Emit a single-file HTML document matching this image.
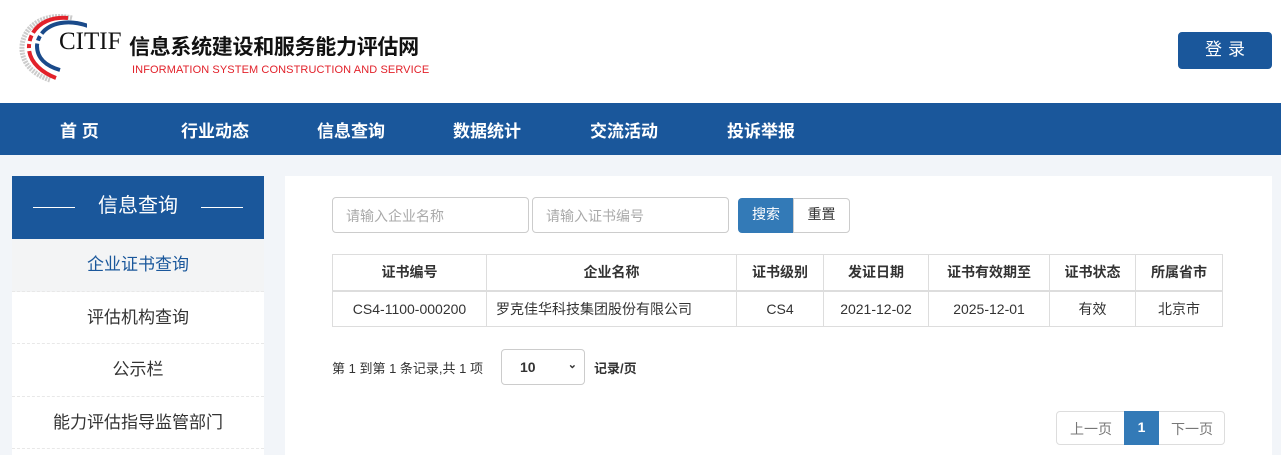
<!DOCTYPE html>
<html><head><meta charset="utf-8"><style>
*{margin:0;padding:0;box-sizing:border-box}
body{width:1281px;height:455px;overflow:hidden;background:#f2f5f9;font-family:"Liberation Sans","Noto Sans CJK SC",sans-serif;position:relative}
.abs{position:absolute}
.hdr{left:0;top:0;width:1281px;height:103px;background:#fff}
.nav{left:0;top:103px;width:1281px;height:52px;background:#1a579b}
.nav span{position:absolute;top:14px;color:#fff;font-size:17px;font-weight:bold;white-space:nowrap}
.side{left:12px;top:176px;width:252px;height:279px;background:#fff}
.sh{height:63px;background:#1a579b;color:#fff;font-size:20px;text-align:center;line-height:60px;position:relative}
.sh i{position:absolute;top:31px;width:42px;height:1px;background:#fff}
.si{height:52.5px;line-height:52px;text-align:center;font-size:17px;color:#333;border-bottom:1px dashed #e8e8e8}
.panel{left:285px;top:176px;width:987px;height:279px;background:#fff}
.inp{position:absolute;top:197px;height:36px;border:1px solid #ccc;border-radius:4px;font-size:14px;color:#aaa;padding:8px 13px}
table{position:absolute;left:332px;top:254px;border-collapse:collapse;font-size:14px;color:#333}
td,th{border:1px solid #ddd;text-align:center;height:36px;padding:0}
th{border-bottom:2px solid #ddd}
</style></head><body>
<div class="abs hdr"></div>
<svg class="abs" style="left:12px;top:12px" width="75" height="75" viewBox="0 0 75 75">
<path d="M60 6 C35 0 12 12 10 34 C9 50 20 62 38 68" fill="none" stroke="#ccc" stroke-width="5" stroke-dasharray="2 1"/>
<path d="M56 6 C34 4 18 16 17 34 C16 48 28 60 44 66" fill="none" stroke="#e2212a" stroke-width="4" stroke-dasharray="40 3 6 3 4 3"/>
<path d="M76 14 C48 4 26 16 25 34 C25 46 34 54 48 58" fill="none" stroke="#1a4a8a" stroke-width="4" stroke-dasharray="50 3 5 3"/>
</svg>
<div class="abs" style="left:59px;top:28px;font-family:'Liberation Serif',serif;font-size:25px;color:#111">CITIF</div>
<div class="abs" style="left:129px;top:31px;font-size:21px;font-weight:bold;color:#111;letter-spacing:-0.3px">信息系统建设和服务能力评估网</div>
<div class="abs" style="left:132px;top:64px;font-size:11px;color:#e2212a;white-space:nowrap;letter-spacing:0.1px">INFORMATION SYSTEM CONSTRUCTION AND SERVICE</div>
<div class="abs" style="left:1178px;top:32px;width:94px;height:37px;background:#1a579b;border-radius:4px;color:#fff;font-size:17px;text-align:center;line-height:36px;letter-spacing:6px;padding-left:6px">登录</div>
<div class="abs nav">
<span style="left:60px">首 页</span><span style="left:181px">行业动态</span><span style="left:317px">信息查询</span><span style="left:453px">数据统计</span><span style="left:590px">交流活动</span><span style="left:727px">投诉举报</span>
</div>
<div class="abs side">
<div class="sh"><i style="left:21px"></i>信息查询<i style="right:21px"></i></div>
<div class="si" style="background:#f3f4f5;color:#1a579b">企业证书查询</div>
<div class="si">评估机构查询</div>
<div class="si">公示栏</div>
<div class="si">能力评估指导监管部门</div>
</div>
<div class="abs panel"></div>
<div class="inp" style="left:332px;width:197px">请输入企业名称</div>
<div class="inp" style="left:532px;width:197px">请输入证书编号</div>
<div class="abs" style="left:738px;top:198px;width:56px;height:35px;background:#337ab7;border-radius:4px 0 0 4px;color:#fff;font-size:14px;text-align:center;line-height:33px">搜索</div>
<div class="abs" style="left:793px;top:198px;width:57px;height:35px;border:1px solid #ccc;border-radius:0 4px 4px 0;color:#333;font-size:14px;text-align:center;line-height:31px">重置</div>
<table>
<tr><th style="width:154px">证书编号</th><th style="width:250px">企业名称</th><th style="width:87px">证书级别</th><th style="width:105px">发证日期</th><th style="width:121px">证书有效期至</th><th style="width:86px">证书状态</th><th style="width:87px">所属省市</th></tr>
<tr><td>CS4-1100-000200</td><td style="text-align:left;padding-left:9px">罗克佳华科技集团股份有限公司</td><td>CS4</td><td>2021-12-02</td><td>2025-12-01</td><td>有效</td><td>北京市</td></tr>
</table>
<div class="abs" style="left:332px;top:358px;font-size:13px;color:#333">第 1 到第 1 条记录,共 1 项</div>
<div class="abs" style="left:501px;top:349px;width:84px;height:36px;border:1px solid #ccc;border-radius:4px;font-size:14px;font-weight:bold;color:#333;padding:9px 18px">10<span style="position:absolute;right:7px;top:8px;font-size:11px">&#8964;</span></div>
<div class="abs" style="left:594px;top:358px;font-size:13px;font-weight:bold;color:#333">记录/页</div>
<div class="abs" style="left:1056px;top:411px;width:169px;height:34px;border:1px solid #ddd;border-radius:4px;font-size:14px;color:#777">
<span class="abs" style="left:13px;top:7px">上一页</span>
<span class="abs" style="left:67px;top:-1px;width:35px;height:34px;background:#337ab7;color:#fff;text-align:center;line-height:33px;font-weight:bold">1</span>
<span class="abs" style="left:114px;top:7px">下一页</span>
</div>
</body></html>
